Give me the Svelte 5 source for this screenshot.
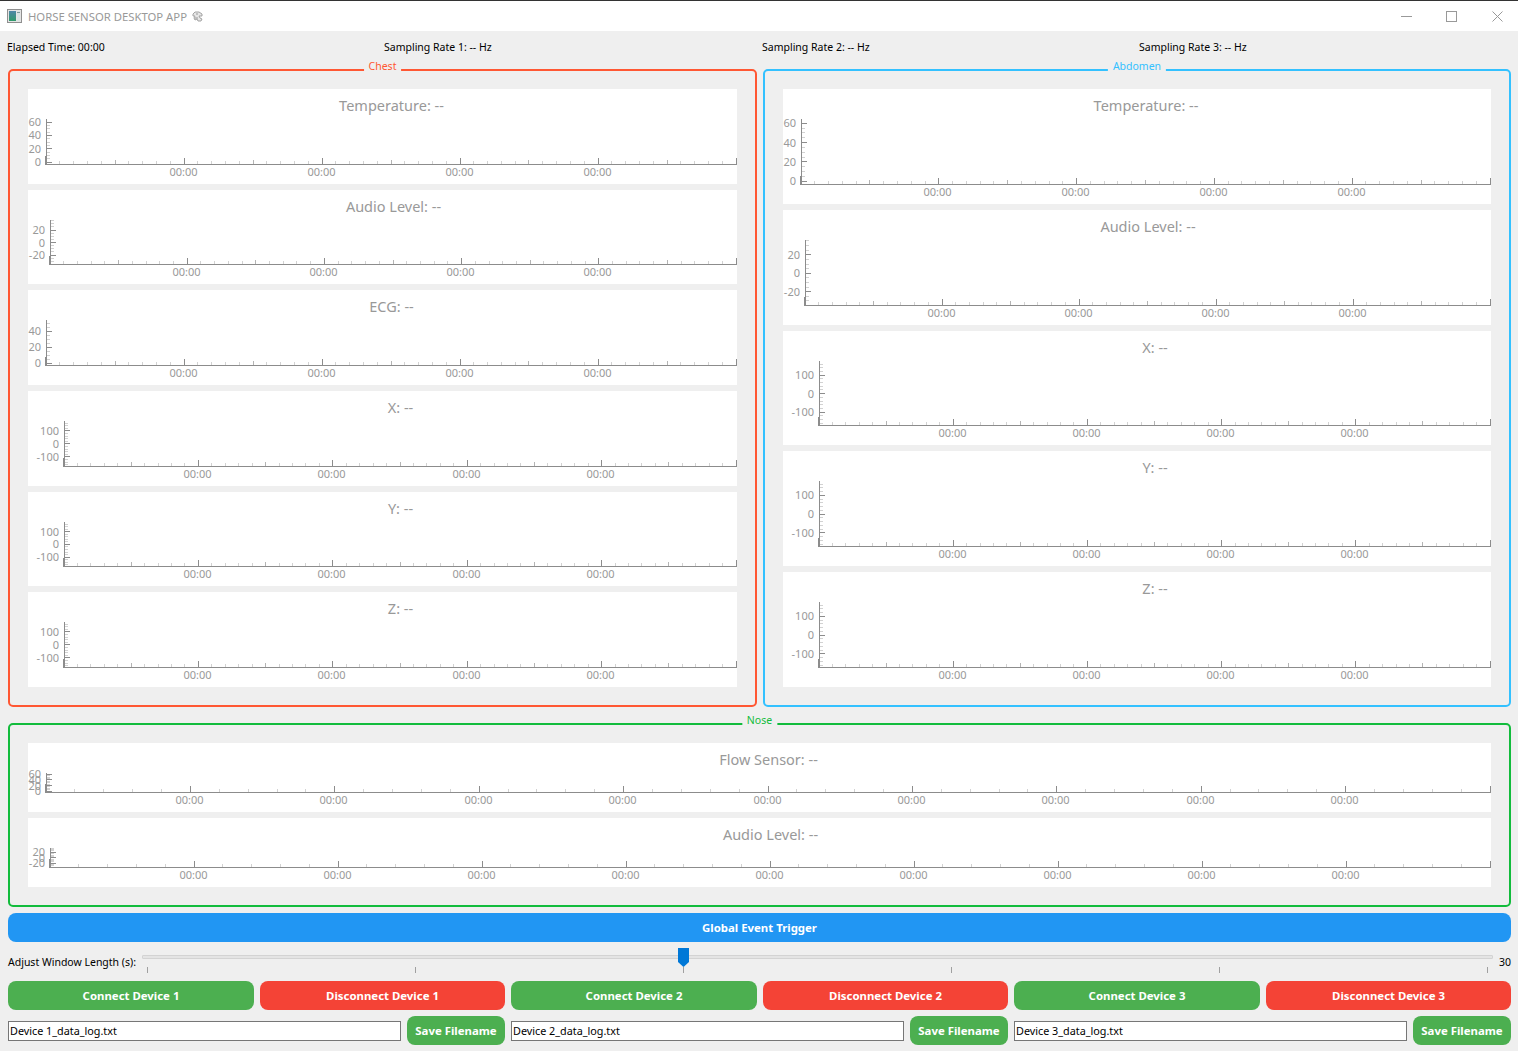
<script>
	// axis ranges read off the screenshot, pyqtgraph style autorange
	const temp = { max: 64.5, min: -3, labels: [60, 40, 20, 0], step: 20, sub: 4 };
	const audio = { max: 36, min: -34.4, labels: [20, 0, -20], step: 20, sub: 4 };
	const ecg = { max: 53.75, min: -2.5, labels: [40, 20, 0], step: 20, sub: 4 };
	const axis = { max: 177, min: -170, labels: [100, 0, -100], step: 100, sub: 5 };

	const chest = [
		{ title: "Temperature: --", h: 95, left: 18, y: temp },
		{ title: "Audio Level: --", h: 94, left: 22, y: audio },
		{ title: "ECG: --", h: 95, left: 18, y: ecg },
		{ title: "X: --", h: 95, left: 36, y: axis },
		{ title: "Y: --", h: 94, left: 36, y: axis },
		{ title: "Z: --", h: 95, left: 36, y: axis }
	];
	const abdomen = [
		{ title: "Temperature: --", h: 115, left: 18, y: temp },
		{ title: "Audio Level: --", h: 115, left: 22, y: audio },
		{ title: "X: --", h: 114, left: 36, y: axis },
		{ title: "Y: --", h: 115, left: 36, y: axis },
		{ title: "Z: --", h: 115, left: 36, y: axis }
	];
	const nose = [
		{ title: "Flow Sensor: --", h: 69, left: 18, y: temp },
		{ title: "Audio Level: --", h: 69, left: 22, y: audio }
	];

	const AXIS_TOP = 30;
	const AXIS_GAP = 20;

	const px = (v) => Math.floor(v) + 0.5;

	function layoutPlot(p, width, majors, mediums, minors) {
		const bottom = p.h - AXIS_GAP;
		const span = width - p.left - 1;
		const valueY = (v) => AXIS_TOP + ((p.y.max - v) / (p.y.max - p.y.min)) * (bottom - AXIS_TOP);

		const xTicks = [];
		for (let i = 1; i <= minors; i++) {
			const f = i / minors;
			let len = 3;
			if ((i * mediums) % minors === 0) len = 4;
			if ((i * majors) % minors === 0) len = 6;
			xTicks.push({ x: px(p.left + span * f), len });
		}

		const yMinor = [];
		const minorStep = p.y.step / p.y.sub;
		for (let v = Math.ceil(p.y.min / minorStep) * minorStep; v <= p.y.max; v += minorStep) {
			yMinor.push(px(valueY(v)));
		}

		return {
			...p,
			width,
			bottom,
			xTicks,
			xLabels: xTicks.filter((t) => t.len === 6 && t.x < width - 2),
			yMinor,
			yLabels: p.y.labels.map((v) => ({ v, y: valueY(v) }))
		};
	}

	const chestPlots = chest.map((p) => layoutPlot(p, 709, 5, 10, 50));
	const abdomenPlots = abdomen.map((p) => layoutPlot(p, 708, 5, 10, 50));
	const nosePlots = nose.map((p) => layoutPlot(p, 1463, 10, 10, 50));

	const groups = [
		{ name: "Chest", cls: "chest", plots: chestPlots },
		{ name: "Abdomen", cls: "abdomen", plots: abdomenPlots }
	];

	const rates = ["Sampling Rate 1: -- Hz", "Sampling Rate 2: -- Hz", "Sampling Rate 3: -- Hz"];
	const devices = [1, 2, 3];
	const sliderTicks = [0, 1, 2, 3, 4, 5];
	let sliderPos = 40;
</script>

{#snippet plot(p)}
	<div class="plot">
		<div class="plot-title" style="padding-left: {p.left}px">{p.title}</div>
		<svg class="plot-svg" width={p.width} height={p.h} viewBox="0 0 {p.width} {p.h}">
			{#each p.yMinor as y}
				<line class="tick-minor" x1={p.left} x2={p.left + 4} y1={y} y2={y} />
			{/each}
			{#each p.xTicks as t}
				<line
					class={t.len === 6 ? "tick-major" : t.len === 4 ? "tick-mid" : "tick-minor"}
					x1={t.x}
					x2={t.x}
					y1={p.bottom - t.len}
					y2={p.bottom}
				/>
			{/each}
			{#each p.yLabels as l}
				<line class="tick-major" x1={p.left} x2={p.left + 6} y1={px(l.y)} y2={px(l.y)} />
				<text class="num" x={p.left - 5} y={l.y + 4} text-anchor="end">{l.v}</text>
			{/each}
			{#each p.xLabels as t}
				<text class="num" x={t.x - 1} y={p.bottom + 12} text-anchor="middle">00:00</text>
			{/each}
			<line class="axis" x1={p.left + 0.5} x2={p.left + 0.5} y1={AXIS_TOP} y2={p.bottom + 1} />
			<line class="axis" x1={p.left - 0.5} x2={p.left - 0.5} y1={p.bottom - 8} y2={p.bottom + 1} />
			<line class="axis" x1={p.left} x2={p.width} y1={p.bottom + 0.5} y2={p.bottom + 0.5} />
		</svg>
	</div>
{/snippet}

<div class="window">
	<header class="titlebar">
		<svg class="app-icon" width="16" height="15" viewBox="0 0 16 15">
			<defs>
				<linearGradient id="screen" x1="0" y1="0" x2="0" y2="1">
					<stop offset="0" stop-color="#4f86a8" />
					<stop offset="1" stop-color="#2f9a6a" />
				</linearGradient>
			</defs>
			<rect x="0.5" y="0.5" width="14" height="13" fill="#e4e4e4" stroke="#8f8f8f" />
			<rect x="2" y="2" width="7" height="10" fill="url(#screen)" />
			<rect x="10" y="2" width="3" height="10" fill="#d9e3e3" />
			<rect x="10" y="3" width="3" height="1" fill="#7d9a9a" />
		</svg>
		<span class="app-name">HORSE SENSOR DESKTOP APP</span>
		<svg class="horse" width="11" height="11" viewBox="0 0 11 11">
			<path d="M1 3 L3 1 L7 1 L10 3 L10 5 L7 5 L8 7 L10 8 L9 10 L6 10 L5 8 L3 9 L2 7 L3 5 L1 5 Z" fill="#e6e6e6" stroke="#a3a3a3" stroke-width="1" />
			<path d="M4 3 H6 M3 7 H6" stroke="#9a9a9a" fill="none" />
		</svg>
		<div class="win-controls">
			<span class="win-btn">
				<svg width="11" height="11" viewBox="0 0 11 11"><path d="M0 5.5 H11" /></svg>
			</span>
			<span class="win-btn">
				<svg width="11" height="11" viewBox="0 0 11 11"><rect x="0.5" y="0.5" width="10" height="10" /></svg>
			</span>
			<span class="win-btn">
				<svg width="11" height="11" viewBox="0 0 11 11"><path d="M0.5 0.5 L10.5 10.5 M10.5 0.5 L0.5 10.5" /></svg>
			</span>
		</div>
	</header>

	<main class="content">
		<div class="status">
			<span>Elapsed Time: 00:00</span>
			{#each rates as r}
				<span>{r}</span>
			{/each}
		</div>

		<div class="columns">
			{#each groups as g}
				<section class="group {g.cls}">
					<span class="legend">{g.name}</span>
					<div class="plots">
						{#each g.plots as p}
							{@render plot(p)}
						{/each}
					</div>
				</section>
			{/each}
		</div>

		<section class="group nose">
			<span class="legend">Nose</span>
			<div class="plots">
				{#each nosePlots as p}
					{@render plot(p)}
				{/each}
			</div>
		</section>

		<button class="btn trigger">Global Event Trigger</button>

		<div class="slider-row">
			<span class="slider-label">Adjust Window Length (s):</span>
			<div class="slider">
				<div class="groove"></div>
				<div class="slider-ticks">
					{#each sliderTicks as t}
						<i></i>
					{/each}
				</div>
				<svg class="handle" style="left: {sliderPos}%" width="11" height="19" viewBox="0 0 11 19">
					<path d="M0 0 H11 V14 L5.5 19 L0 14 Z" />
				</svg>
			</div>
			<span class="slider-value">30</span>
		</div>

		<div class="device-grid">
			{#each devices as d}
				<div class="device-btns">
					<button class="btn go">Connect Device {d}</button>
					<button class="btn stop">Disconnect Device {d}</button>
				</div>
			{/each}
		</div>

		<div class="device-grid files">
			{#each devices as d}
				<div class="file-row">
					<input class="file-input" type="text" value="Device {d}_data_log.txt" />
					<button class="btn go save">Save Filename</button>
				</div>
			{/each}
		</div>
	</main>
</div>

<style>
	:global(body) {
		margin: 0;
		padding: 0;
		background-color: #efefef;
		font-family: "Noto Sans", "Open Sans", sans-serif;
		font-size: 10.5px;
		color: #000;
	}
	.window {
		width: 1518px;
		height: 1051px;
		overflow: hidden;
		display: flex;
		flex-direction: column;
	}
	.titlebar {
		height: 30px;
		flex: none;
		display: flex;
		align-items: center;
		background-color: #fff;
		border-top: 1px solid #333;
		padding-left: 7px;
	}
	.app-icon {
		flex: none;
		margin-right: 5px;
	}
	.app-name {
		font-size: 11.3px;
		color: #999;
	}
	.horse {
		margin-left: 5px;
	}
	.win-controls {
		margin-left: auto;
		margin-right: -2px;
		display: flex;
	}
	.win-btn {
		width: 45.5px;
		height: 30px;
		display: flex;
		align-items: center;
		justify-content: center;
	}
	.win-btn svg {
		fill: none;
		stroke: #999;
		stroke-width: 1;
	}
	.content {
		flex: 1;
		display: flex;
		flex-direction: column;
		padding: 0 7px 0 8px;
	}
	.status {
		height: 38px;
		flex: none;
		display: grid;
		grid-template-columns: 377px 378px 377px 377px;
		align-items: center;
		margin-left: -1px;
		padding-bottom: 6px;
		box-sizing: border-box;
	}
	.columns {
		display: flex;
		gap: 6px;
	}
	.columns .group {
		flex: 1;
	}
	.group {
		position: relative;
		border: 2px solid;
		border-radius: 5px;
		padding: 18px;
	}
	.chest {
		border-color: #ff5733;
		color: #ff5733;
	}
	.abdomen {
		border-color: #33c1ff;
		color: #33c1ff;
	}
	.nose {
		margin-top: 16px;
		border-color: #12bc3c;
		color: #12bc3c;
	}
	.legend {
		position: absolute;
		top: -13px;
		left: 50%;
		transform: translateX(-50%);
		padding: 0 5px;
		line-height: 16px;
		white-space: nowrap;
		background: linear-gradient(to bottom, transparent 10px, #efefef 10px);
	}
	.plots {
		display: flex;
		flex-direction: column;
		gap: 6px;
	}
	.plot {
		position: relative;
		background-color: #fff;
	}
	.plot-svg {
		display: block;
	}
	.plot-title {
		position: absolute;
		top: 6px;
		left: 0;
		right: 0;
		text-align: center;
		font-size: 14.5px;
		line-height: 20px;
		color: #999;
	}
	.num {
		font-size: 11px;
		fill: #999;
	}
	.axis {
		stroke: #8c8c8c;
		stroke-width: 1;
	}
	.tick-major {
		stroke: #8c8c8c;
		stroke-width: 1;
	}
	.tick-mid {
		stroke: #b4b4b4;
		stroke-width: 1;
	}
	.tick-minor {
		stroke: #d2d2d2;
		stroke-width: 1;
	}
	.btn {
		border: none;
		color: #fff;
		font-family: inherit;
		font-size: 11.4px;
		font-weight: 700;
		border-radius: 8px;
		padding: 0;
		height: 29px;
		cursor: pointer;
	}
	.trigger {
		flex: none;
		margin-top: 6px;
		background-color: #2196f3;
	}
	.go {
		background-color: #4caf50;
	}
	.stop {
		background-color: #f44336;
	}
	.slider-row {
		height: 39px;
		flex: none;
		display: flex;
		align-items: flex-start;
	}
	.slider-label {
		flex: none;
		width: 134px;
		margin-top: 12px;
		line-height: 16px;
		white-space: nowrap;
	}
	.slider {
		position: relative;
		flex: none;
		width: 1351px;
		height: 39px;
	}
	.groove {
		margin-top: 13px;
		height: 2px;
		background-color: #e4e4e4;
		border: 1px solid #d3d3d3;
		border-radius: 1px;
	}
	.slider-ticks {
		display: flex;
		justify-content: space-between;
		padding: 8px 5px 0;
	}
	.slider-ticks i {
		width: 1px;
		height: 6px;
		background-color: #a0a0a0;
	}
	.handle {
		position: absolute;
		top: 6px;
		margin-left: -4px;
		fill: #0078d7;
	}
	.slider-value {
		margin-top: 12px;
		margin-left: 6px;
		line-height: 16px;
	}
	.device-grid {
		flex: none;
		display: grid;
		grid-template-columns: repeat(3, 1fr);
		gap: 6px;
	}
	.files {
		margin-top: 6px;
	}
	.device-btns {
		display: grid;
		grid-template-columns: 246px 245px;
		gap: 6px;
	}
	.file-row {
		display: flex;
		align-items: center;
		gap: 6px;
	}
	.file-input {
		flex: 1;
		min-width: 0;
		height: 20px;
		box-sizing: border-box;
		border: 1px solid #767676;
		background-color: #fff;
		padding: 0 1px;
		font-family: inherit;
		font-size: 10.8px;
		color: #000;
	}
	.save {
		flex: none;
		width: 98px;
	}
</style>
